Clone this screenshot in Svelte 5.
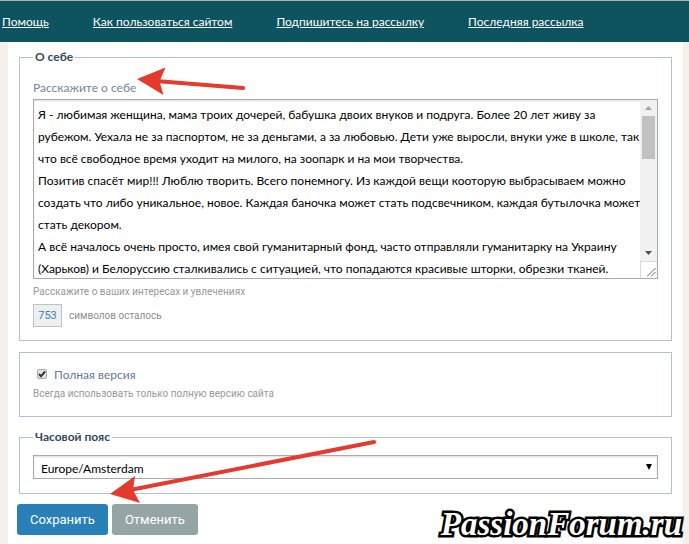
<script>
  const links = ["Помощь", "Как пользоваться сайтом", "Подпишитесь на рассылку", "Последняя рассылка"];
  const zones = ["Europe/Amsterdam"];

  let about = $state(
    `Я - любимая женщина, мама троих дочерей, бабушка двоих внуков и подруга. Более 20 лет живу за рубежом. Уехала не за паспортом, не за деньгами, а за любовью. Дети уже выросли, внуки уже в школе, так что всё свободное время уходит на милого, на зоопарк и на мои творчества.
Позитив спасёт мир!!! Люблю творить. Всего понемногу. Из каждой вещи кооторую выбрасываем можно создать что либо уникальное, новое. Каждая баночка может стать подсвечником, каждая бутылочка может стать декором.
А всё началось очень просто, имея свой гуманитарный фонд, часто отправляли гуманитарку на Украину (Харьков) и Белоруссию сталкивались с ситуацией, что попадаются красивые шторки, обрезки тканей.`
  );
  let fullVersion = $state(true);
  let timezone = $state("Europe/Amsterdam");
  let symbolsLeft = $state(753);
</script>

<div class="page">
  <nav class="top-nav">
    {#each links as link}
      <a href="#top">{link}</a>
    {/each}
  </nav>

  <main>
    <form onsubmit={(e) => e.preventDefault()}>
      <fieldset class="about">
        <legend>О себе</legend>
        <label class="field-label" for="about">Расскажите о себе</label>
        <div class="text-box">
          <textarea id="about" bind:value={about} spellcheck="false"></textarea>
          <div class="scroll-column" aria-hidden="true">
            <div class="track">
              <svg width="7" height="4" viewBox="0 0 7 4"><path d="M0 4 3.5 0 7 4z" fill="#a3a3a3" /></svg>
              <div class="thumb"></div>
              <svg class="down" width="7" height="4" viewBox="0 0 7 4"><path d="M0 0h7L3.5 4z" fill="#505050" /></svg>
            </div>
            <div class="grip">
              <svg width="9" height="9" viewBox="0 0 9 9"><path d="M0 8.500 8.500 0M4 8.500 8.500 4" stroke="#666" fill="none" /></svg>
            </div>
          </div>
        </div>
        <p class="hint">Расскажите о ваших интересах и увлечениях</p>
        <div class="counter">
          <output>{symbolsLeft}</output>
          <span>символов осталось</span>
        </div>
      </fieldset>

      <fieldset class="version">
        <label class="check">
          <input type="checkbox" bind:checked={fullVersion} />
          Полная версия
        </label>
        <p class="hint">Всегда использовать только полную версию сайта</p>
      </fieldset>

      <fieldset class="zone">
        <legend>Часовой пояс</legend>
        <div class="select-box">
          <select bind:value={timezone} aria-label="Часовой пояс">
            {#each zones as zone}
              <option>{zone}</option>
            {/each}
          </select>
          <svg class="caret" width="6" height="6" viewBox="0 0 6 6"><path d="M0 0h6L3 6z" /></svg>
        </div>
      </fieldset>

      <div class="buttons">
        <button class="save" type="submit">Сохранить</button>
        <button class="cancel" type="button">Отменить</button>
      </div>
    </form>
  </main>

  <svg class="arrows" width="400" height="510" viewBox="0 0 400 510" aria-hidden="true">
    <g stroke="#e53a2e" stroke-width="4" stroke-linecap="round">
      <path d="M156 81 243 88" />
      <path d="M130 490 374 442" />
    </g>
    <g fill="#e53a2e">
      <path d="M137 79 165.500 67.500 159.500 81.500 163.500 95z" />
      <path d="M110 494 135 476 133 490 140 503z" />
    </g>
  </svg>

  <div class="watermark">PassionForum.ru</div>
</div>

<style>
  :global(body) {
    margin: 0;
    background: #f5f1ea;
  }

  .page {
    position: relative;
    display: flex;
    flex-direction: column;
    min-height: 100vh;
    overflow: hidden;
    font-family: Lato, "Noto Sans", sans-serif;
    font-size: 12px;
  }

  .top-nav {
    display: flex;
    align-items: center;
    gap: 44px;
    box-sizing: border-box;
    height: 42px;
    padding-left: 2px;
    border-top: 1px solid #b0b0b0;
    background: #0d5360;
    white-space: nowrap;
  }

  .top-nav a {
    color: #fff;
    text-decoration: underline;
  }

  main {
    flex: 1;
    margin: 0 6px 0 8px;
    padding: 7px 9px 9px;
    background: #fff;
  }

  fieldset {
    min-width: 0;
    margin: 0 2px;
    padding: 0 13px;
    border: 1px solid #b4c3c8;
  }

  legend {
    padding: 0 2px;
    color: #34495e;
    font-weight: 700;
    line-height: 16px;
  }

  .about {
    padding-top: 12px;
    padding-bottom: 13px;
  }

  .version {
    margin-top: 11px;
    margin-bottom: 12px;
    padding-top: 11px;
    padding-bottom: 14px;
  }

  .zone {
    padding-top: 10px;
    padding-bottom: 14px;
  }

  .field-label {
    display: block;
    color: #7384a0;
    line-height: 22px;
  }

  .text-box {
    display: flex;
    box-sizing: border-box;
    height: 180px;
    border: 1px solid #aaa;
    box-shadow: inset 0 1px 2px #ddd;
  }

  textarea {
    flex: 1;
    min-width: 0;
    box-sizing: border-box;
    margin: 0 -3px 0 0;
    padding: 4px 0 4px 4px;
    border: 0;
    outline: 0;
    background: transparent;
    color: #000;
    font: inherit;
    line-height: 22px;
    resize: none;
    overflow: hidden;
  }

  .scroll-column {
    display: flex;
    flex-direction: column;
    width: 17px;
  }

  .track {
    flex: 1;
    display: flex;
    flex-direction: column;
    align-items: center;
    padding: 6px 0;
    background: #f1f1f1;
  }

  .thumb {
    width: 13px;
    height: 43px;
    margin-top: 6px;
    background: #c1c1c1;
  }

  .down {
    margin-top: auto;
  }

  .grip {
    display: flex;
    align-items: flex-end;
    justify-content: flex-end;
    box-sizing: border-box;
    height: 17px;
    padding: 1px;
    border-top: 1px solid #d9d9d9;
    border-left: 1px solid #d9d9d9;
  }

  .hint,
  .counter {
    font-family: Roboto, "Noto Sans", sans-serif;
    font-size: 10px;
  }

  .hint {
    margin: 5px 0 4px;
    color: #999;
    line-height: 16px;
  }

  .version .hint {
    margin: 0;
  }

  .counter {
    display: flex;
    align-items: center;
    gap: 7px;
    color: #8a8f8f;
  }

  .counter output {
    box-sizing: border-box;
    width: 29px;
    border: 1px solid #bdc3c7;
    background: #ecf0f1;
    color: #3d7db5;
    font-size: 11px;
    line-height: 21px;
    text-align: center;
  }

  .check {
    display: flex;
    align-items: center;
    gap: 7px;
    color: #6478a0;
    line-height: 22px;
  }

  .check input {
    appearance: none;
    width: 10px;
    height: 10px;
    margin: 0 0 3px 4px;
    border: 1px solid #aaa;
    border-radius: 2px;
    box-sizing: border-box;
    background: #e8e8e8;
  }

  .check input:checked {
    background: #e4e4e4 url("data:image/svg+xml,%3Csvg xmlns='http://www.w3.org/2000/svg' viewBox='0 0 8 8'%3E%3Cpath d='M1 4 3 6.300 7 1.500' fill='none' stroke='%23333' stroke-width='2'/%3E%3C/svg%3E");
  }

  .select-box {
    display: grid;
    align-items: center;
  }

  .select-box select,
  .select-box .caret {
    grid-area: 1 / 1;
  }

  .caret {
    justify-self: end;
    margin-right: 6px;
    pointer-events: none;
  }

  select {
    appearance: none;
    width: 100%;
    height: 24px;
    padding: 2px 7px 0;
    border: 1px solid #aaa;
    border-radius: 0;
    box-shadow: inset 0 1px 2px #ddd;
    background: #fff;
    color: #000;
    font: inherit;
  }

  .buttons {
    display: flex;
    gap: 4px;
    margin-top: 10px;
  }

  button {
    height: 31px;
    padding: 0 13px;
    border: 0;
    border-radius: 3px;
    color: #fff;
    font-family: Roboto, sans-serif;
    font-size: 13px;
  }

  .save {
    background: #2980b9;
  }

  .cancel {
    background: #95a5a6;
  }

  .arrows {
    position: absolute;
    top: 0;
    left: 0;
    pointer-events: none;
  }

  .watermark {
    position: absolute;
    right: 7px;
    bottom: 2px;
    color: #fff;
    font: italic 700 33px/36px "Liberation Serif", serif;
    -webkit-text-stroke: 5px #000;
    stroke-linejoin: round;
    paint-order: stroke fill;
  }
</style>
